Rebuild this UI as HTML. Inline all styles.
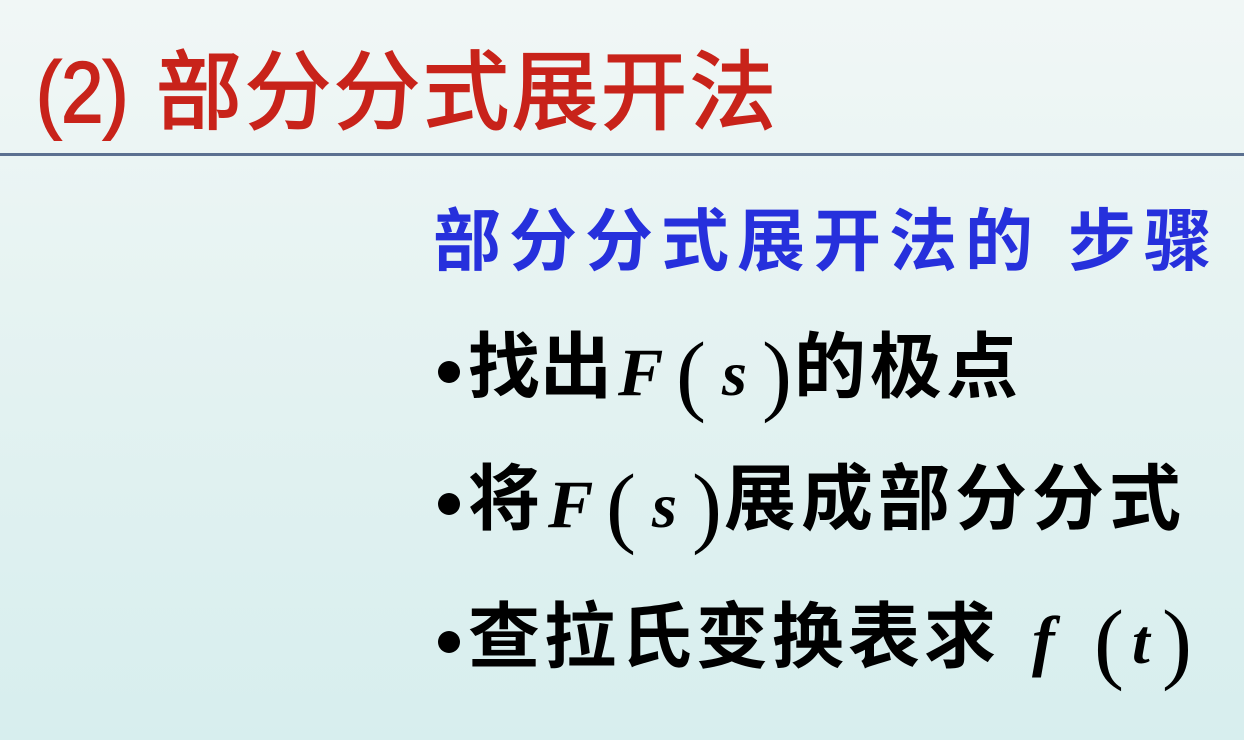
<!DOCTYPE html>
<html><head><meta charset="utf-8"><style>
html,body{margin:0;padding:0}
body{width:1244px;height:740px;overflow:hidden;position:relative;background:linear-gradient(180deg,#f1f7f6 0%,#e6f3f2 40%,#d7eeee 100%);}
.t{position:absolute;white-space:nowrap;line-height:1;}
.cjk{font-family:"Liberation Sans","Noto Sans CJK SC",sans-serif;font-weight:bold;}
.m{font-family:"Liberation Serif",serif;font-style:italic;font-weight:bold;}
.p{font-family:"Liberation Serif",serif;}
.line{position:absolute;left:0;top:153px;width:1244px;height:3px;background:#5b7090;}
.dot{position:absolute;width:22px;height:22px;border-radius:50%;background:#000;}
</style></head><body>
<div class="t cjk" style="left:36px;top:50px;font-size:86px;color:#c8231a;font-weight:normal;-webkit-text-stroke:2px #c8231a;"><span style="display:inline-block;transform:scaleX(0.88);transform-origin:left;width:120px">(2)</span><span style="letter-spacing:3px">部分分式展开法</span></div>
<div class="line"></div>
<div class="t cjk" style="left:433px;top:208px;font-size:68px;color:#2630dc;letter-spacing:8px;">部分分式展开法的 步骤</div>

<div class="dot" style="left:438px;top:361px"></div>
<div class="t cjk" style="left:468px;top:332px;font-size:72px;color:#000;">找出</div>
<div class="t m" style="left:618px;top:338px;font-size:68px;">F</div>
<div class="t p" style="left:676px;top:330px;font-size:90px;">(</div>
<div class="t m" style="left:722px;top:342px;font-size:64px;">s</div>
<div class="t p" style="left:762px;top:330px;font-size:90px;">)</div>
<div class="t cjk" style="left:794px;top:332px;font-size:72px;letter-spacing:4px">的极点</div>

<div class="dot" style="left:438px;top:493px"></div>
<div class="t cjk" style="left:468px;top:464px;font-size:72px;">将</div>
<div class="t m" style="left:548px;top:470px;font-size:68px;">F</div>
<div class="t p" style="left:606px;top:462px;font-size:90px;">(</div>
<div class="t m" style="left:652px;top:474px;font-size:64px;">s</div>
<div class="t p" style="left:692px;top:462px;font-size:90px;">)</div>
<div class="t cjk" style="left:724px;top:464px;font-size:72px;letter-spacing:5px">展成部分分式</div>

<div class="dot" style="left:438px;top:631px"></div>
<div class="t cjk" style="left:468px;top:602px;font-size:72px;letter-spacing:4px">查拉氏变换表求</div>
<div class="t m" style="left:1032px;top:606px;font-size:68px;">f</div>
<div class="t p" style="left:1094px;top:598px;font-size:90px;">(</div>
<div class="t m" style="left:1132px;top:610px;font-size:64px;">t</div>
<div class="t p" style="left:1162px;top:598px;font-size:90px;">)</div>
</body></html>
